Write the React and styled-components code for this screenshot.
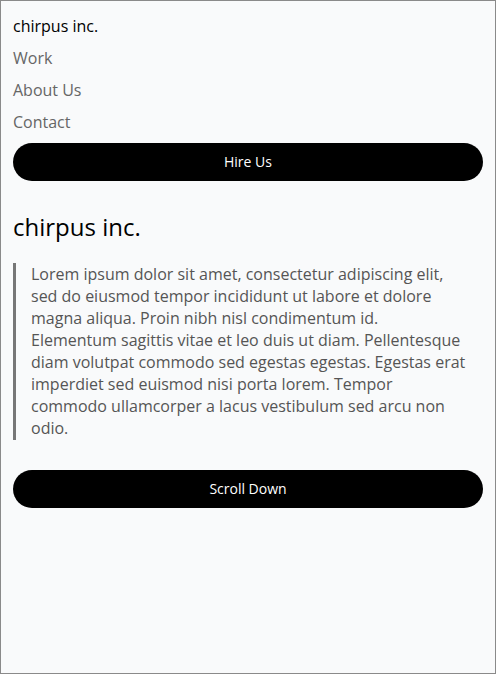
import React from "react";
import styled, { createGlobalStyle } from "styled-components";

const Global = createGlobalStyle`
  html, body { margin: 0; padding: 0; }
  body { font-family: "Open Sans", "Noto Sans", sans-serif; background: #f9fafb; }
  * { box-sizing: border-box; }
`;

const Page = styled.div`
  min-height: 100vh;
  border: 1px solid #8a8a8a;
  background: #f9fafb;
  padding: 9px 12px 12px;
`;

const Nav = styled.nav`
  display: flex;
  flex-direction: column;
`;

const NavItem = styled.a`
  font-size: 16px;
  line-height: 32px;
  color: ${(p) => (p.$brand ? "#000" : "#666")};
  text-decoration: none;
`;

const PillButton = styled.button`
  display: block;
  width: 100%;
  border: none;
  border-radius: 999px;
  background: #000;
  color: #fff;
  font-family: inherit;
  font-size: 14px;
  line-height: 22px;
  padding: 8px 16px;
  margin-top: ${(p) => p.$mt}px;
  cursor: pointer;
`;

const Title = styled.h1`
  margin: 30px 0 0;
  font-size: 24px;
  font-weight: 400;
  line-height: 32px;
  color: #000;
`;

const Quote = styled.blockquote`
  margin: 20px 16px 0 0;
  border-left: 3px solid #777;
  padding: 0 0 1px 15px;
  font-size: 16px;
  line-height: 22px;
  color: #555;
`;

export default function App() {
  return (
    <>
      <Global />
      <Page>
        <Nav>
          <NavItem $brand>chirpus inc.</NavItem>
          <NavItem>Work</NavItem>
          <NavItem>About Us</NavItem>
          <NavItem>Contact</NavItem>
        </Nav>
        <PillButton $mt={5}>Hire Us</PillButton>
        <Title>chirpus inc.</Title>
        <Quote>
          Lorem ipsum dolor sit amet, consectetur adipiscing elit, sed do eiusmod tempor incididunt ut labore et dolore magna aliqua. Proin nibh nisl condimentum id. Elementum sagittis vitae et leo duis ut diam. Pellentesque diam volutpat commodo sed egestas egestas. Egestas erat imperdiet sed euismod nisi porta lorem. Tempor commodo ullamcorper a lacus vestibulum sed arcu non odio.
        </Quote>
        <PillButton $mt={30}>Scroll Down</PillButton>
      </Page>
    </>
  );
}
